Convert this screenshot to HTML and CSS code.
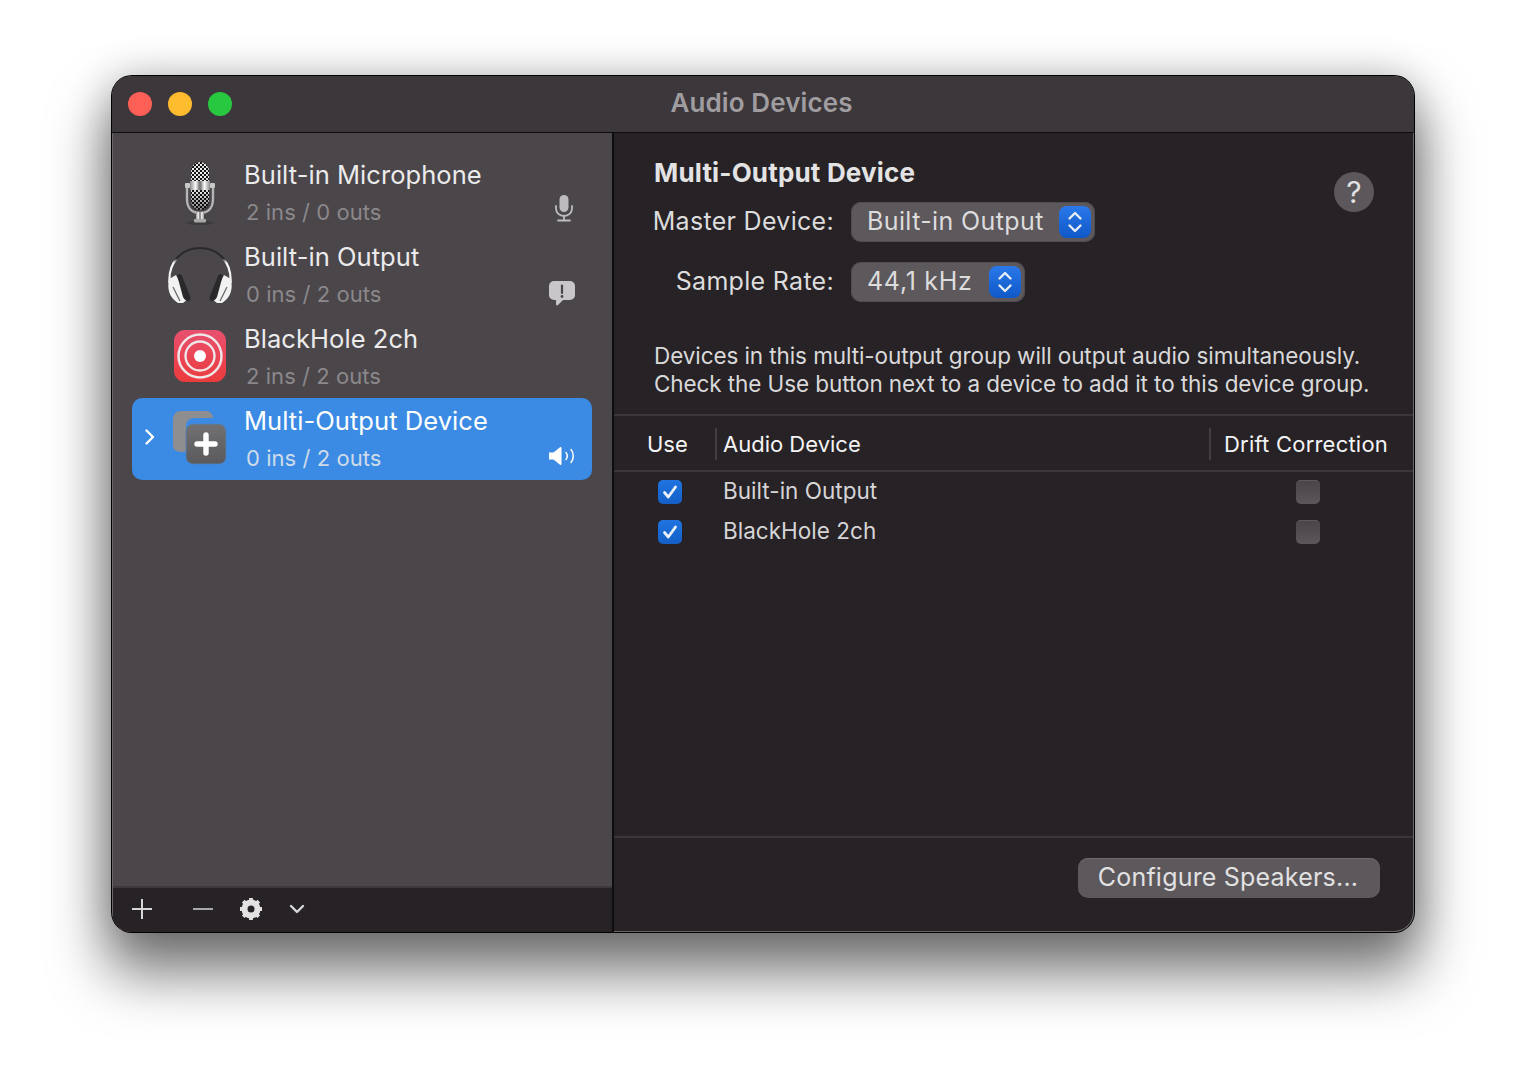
FILE: index.html
```html
<!DOCTYPE html>
<html lang="en">
<head>
<meta charset="utf-8">
<title>Audio Devices</title>
<link rel="stylesheet" href="styles.css">
</head>
<body>
<svg class="defs" width="0" height="0" aria-hidden="true">
  <defs>
    <pattern id="mesh" width="4" height="4" patternUnits="userSpaceOnUse">
      <rect width="4" height="4" fill="#141414"/>
      <rect width="2" height="2" fill="#f2f2f2"/>
      <rect x="2" y="2" width="2" height="2" fill="#d8d8d8"/>
    </pattern>
    <linearGradient id="chrome" x1="0" x2="1" y1="0" y2="0">
      <stop offset="0" stop-color="#8a8a8a"/><stop offset=".28" stop-color="#fafafa"/>
      <stop offset=".5" stop-color="#6c6c6c"/><stop offset=".72" stop-color="#fafafa"/>
      <stop offset="1" stop-color="#8a8a8a"/>
    </linearGradient>
    <linearGradient id="bodyfade" x1="0" x2="0" y1="0" y2="1">
      <stop offset="0" stop-color="#000" stop-opacity="0"/><stop offset="1" stop-color="#000" stop-opacity=".45"/>
    </linearGradient>
    <linearGradient id="bh" x1="0" x2="0" y1="0" y2="1">
      <stop offset="0" stop-color="#e8506f"/><stop offset="1" stop-color="#ec3b3d"/>
    </linearGradient>
    <linearGradient id="tile" x1="0" x2="0" y1="0" y2="1">
      <stop offset="0" stop-color="#717173"/><stop offset="1" stop-color="#5a5a5c"/>
    </linearGradient>
    <linearGradient id="band" x1="0" x2="0" y1="0" y2="1">
      <stop offset="0" stop-color="#2b292b"/><stop offset=".3" stop-color="#2b292b"/><stop offset=".42" stop-color="#f6f6f6"/><stop offset="1" stop-color="#f6f6f6"/>
    </linearGradient>
  </defs>
</svg>
<main class="window">
  <header class="titlebar">
    <div class="lights">
      <span class="light red"></span><span class="light yellow"></span><span class="light green"></span>
    </div>
    <h1 class="title">Audio Devices</h1>
  </header>
  <div class="body">
    <aside class="sidebar">
      <ul class="devices">
        <li class="device">
          <span class="chev"></span>
          <svg class="dicon" width="64" height="66" viewBox="0 0 64 66">
            <ellipse cx="32" cy="63" rx="13" ry="2" fill="#333" opacity=".6"/>
            <path d="M19 28v11c0 9 5 14 13 14s13-5 13-14V28" fill="none" stroke="#b5b5b5" stroke-width="2.400"/>
            <rect x="23" y="2" width="18" height="48" rx="9" fill="url(#mesh)"/>
            <rect x="23" y="30" width="18" height="20" rx="7" fill="url(#bodyfade)"/>
            <rect x="22" y="21" width="20" height="9" fill="url(#chrome)"/>
            <rect x="17" y="23" width="5" height="5" rx="1" fill="#c8c8c8"/>
            <rect x="42" y="23" width="5" height="5" rx="1" fill="#c8c8c8"/>
            <rect x="28" y="52" width="8" height="10" fill="url(#chrome)"/>
            <rect x="26" y="59" width="12" height="3.500" rx="1" fill="#a8a8a8"/>
          </svg>
          <div class="dtext"><div class="dname">Built-in Microphone</div><div class="dsub">2 ins / 0 outs</div></div>
          <svg class="status s-mic" width="20" height="28" viewBox="0 0 20 28">
            <rect x="5.500" y="1" width="9" height="17" rx="4.500" fill="#bdbbbd"/>
            <path d="M2 12v2.500c0 4.500 3.500 7.500 8 7.500s8-3 8-7.500V12" fill="none" stroke="#bdbbbd" stroke-width="1.800" stroke-linecap="round"/>
            <path d="M10 22v4M4 26.500h12" stroke="#bdbbbd" stroke-width="1.800" stroke-linecap="round"/>
          </svg>
        </li>
        <li class="device">
          <span class="chev"></span>
          <svg class="dicon" width="68" height="64" viewBox="0 0 68 64">
            <path d="M3.500 40C2 20 15 5 34 5s32 15 30.500 35" fill="none" stroke="url(#band)" stroke-width="2.200"/>
            <path d="M3 36C1 46 3 54 12 60l5 0 5-4L10 32z" fill="#f2f2f2"/>
            <path d="M65 36c2 10 0 18-9 24l-5 0-5-4 12-24z" fill="#f2f2f2"/>
            <path d="M11 32c2-1 4-1 5 1l8 20c1 3 0 5-2 5s-4-2-5-4z" fill="#2a282a"/>
            <path d="M57 32c-2-1-4-1-5 1l-8 20c-1 3 0 5 2 5s4-2 5-4z" fill="#2a282a"/>
            <path d="M7 44l7 14M61 44l-7 14" stroke="#6a6a6a" stroke-width="1.300"/>
          </svg>
          <div class="dtext"><div class="dname">Built-in Output</div><div class="dsub">0 ins / 2 outs</div></div>
          <svg class="status s-alert" width="28" height="26" viewBox="0 0 28 26">
            <path d="M6 1h16a5 5 0 0 1 5 5v9a5 5 0 0 1-5 5h-7l-5 5c-1 .8-2 .4-2-1v-4H6a5 5 0 0 1-5-5V6a5 5 0 0 1 5-5z" fill="#c8c6c8"/>
            <path d="M14 5.500v7.500" stroke="#4a464a" stroke-width="2.200" stroke-linecap="round"/>
            <circle cx="14" cy="16.500" r="1.400" fill="#4a464a"/>
          </svg>
        </li>
        <li class="device">
          <span class="chev"></span>
          <svg class="dicon di-up" width="52" height="52" viewBox="0 0 52 52">
            <rect width="52" height="52" rx="11" fill="url(#bh)"/>
            <circle cx="26" cy="26" r="21.500" fill="none" stroke="#efe6e8" stroke-width="2.400"/>
            <circle cx="26" cy="26" r="14.500" fill="none" stroke="#efe6e8" stroke-width="2.400"/>
            <circle cx="26" cy="26" r="6" fill="#fff"/>
          </svg>
          <div class="dtext"><div class="dname">BlackHole 2ch</div><div class="dsub">2 ins / 2 outs</div></div>
        </li>
        <li class="device selected">
          <span class="chev"><svg width="12" height="18" viewBox="0 0 12 18"><path d="M2.500 2.500L9 9l-6.500 6.500" fill="none" stroke="#fff" stroke-width="2.400" stroke-linecap="round" stroke-linejoin="round"/></svg></span>
          <svg class="dicon di-up" width="54" height="54" viewBox="0 0 54 54">
            <path d="M9 0h24a7 7 0 0 1 7 7H22c-6 0-9 3-9 9v22c0 3-1 3-4 3-6 0-9-2-9-7V9c0-6 3-9 9-9z" fill="#8e8e90"/>
            <rect x="13" y="13" width="40" height="40" rx="7" fill="url(#tile)" stroke="#4f80b8" stroke-width=".800"/>
            <path d="M33 24v18M24 33h18" stroke="#fff" stroke-width="5.400" stroke-linecap="round"/>
          </svg>
          <div class="dtext"><div class="dname">Multi-Output Device</div><div class="dsub">0 ins / 2 outs</div></div>
          <svg class="status s-vol" width="28" height="20" viewBox="0 0 28 20">
            <path d="M1 6.500h4.500L12 1.200c.8-.6 1.500-.2 1.500.8v16c0 1-.7 1.400-1.500.8l-6.500-5.300H1z" fill="#fff"/>
            <path d="M18 6.500c1.500 2 1.500 5 0 7M23 3.500c3 3.500 3 9.500 0 13" fill="none" stroke="#fff" stroke-width="1.500" stroke-linecap="round"/>
          </svg>
        </li>
      </ul>
      <footer class="toolbar">
        <svg class="tool t-plus" width="22" height="22" viewBox="0 0 22 22"><path d="M11 1v20M1 11h20" stroke="#d6d6d6" stroke-width="2"/></svg>
        <svg class="tool t-minus" width="22" height="4" viewBox="0 0 22 4"><path d="M1 2h20" stroke="#a9a8a9" stroke-width="2"/></svg>
        <svg class="tool t-gear" width="24" height="24" viewBox="0 0 24 24">
          <circle cx="12" cy="12" r="6.500" fill="none" stroke="#e2e2e2" stroke-width="6"/>
          <path d="M12 1v22M1 12h22M4.200 4.200l15.600 15.600M19.800 4.200L4.200 19.800" stroke="#e2e2e2" stroke-width="3.800" stroke-dasharray="4.500 13 4.500"/>
        </svg>
        <svg class="tool t-chev" width="16" height="10" viewBox="0 0 16 10"><path d="M2 2l6 6 6-6" fill="none" stroke="#d8d8d8" stroke-width="2.400" stroke-linecap="round" stroke-linejoin="round"/></svg>
      </footer>
    </aside>
    <section class="detail">
      <div class="top">
        <div class="head">
          <h2 class="dtitle">Multi-Output Device</h2>
          <button class="help">?</button>
        </div>
        <div class="form">
          <label class="flabel">Master Device:</label>
          <div class="popup"><span class="ptext">Built-in Output</span>
            <span class="stepper"><svg width="16" height="26" viewBox="0 0 16 26"><path d="M2.500 9.500L8 4l5.500 5.500M2.500 16.500L8 22l5.500-5.500" fill="none" stroke="#e6eefb" stroke-width="2.400" stroke-linecap="round" stroke-linejoin="round"/></svg></span>
          </div>
          <label class="flabel">Sample Rate:</label>
          <div class="popup pop-rate"><span class="ptext">44,1 kHz</span>
            <span class="stepper"><svg width="16" height="26" viewBox="0 0 16 26"><path d="M2.500 9.500L8 4l5.500 5.500M2.500 16.500L8 22l5.500-5.500" fill="none" stroke="#e6eefb" stroke-width="2.400" stroke-linecap="round" stroke-linejoin="round"/></svg></span>
          </div>
        </div>
        <p class="desc">Devices in this multi-output group will output audio simultaneously.<br>Check the Use button next to a device to add it to this device group.</p>
      </div>
      <div class="table">
        <div class="thead">
          <span class="th th-use">Use</span>
          <span class="th th-name">Audio Device</span>
          <span class="th th-drift">Drift Correction</span>
        </div>
        <div class="trow">
          <span class="check on"><svg width="18" height="18" viewBox="0 0 18 18"><path d="M3.500 9.500l3.800 4.500L14.500 4" fill="none" stroke="#eaf1fb" stroke-width="2.800" stroke-linecap="round" stroke-linejoin="round"/></svg></span>
          <span class="rname">Built-in Output</span>
          <span class="check"></span>
        </div>
        <div class="trow">
          <span class="check on"><svg width="18" height="18" viewBox="0 0 18 18"><path d="M3.500 9.500l3.800 4.500L14.500 4" fill="none" stroke="#eaf1fb" stroke-width="2.800" stroke-linecap="round" stroke-linejoin="round"/></svg></span>
          <span class="rname">BlackHole 2ch</span>
          <span class="check"></span>
        </div>
      </div>
      <div class="bottom">
        <button class="cfg">Configure Speakers...</button>
      </div>
    </section>
  </div>
</main>
</body>
</html>
```

FILE: styles.css
```css
* { box-sizing: border-box; }
html, body { margin: 0; height: 100%; }
body {
  background: #fff;
  padding: 76px 112px 148px;
  font-family: Inter, "Liberation Sans", sans-serif;
  overflow: hidden;
}
.defs { position: absolute; }
.window {
  height: 856px;
  border-radius: 20px;
  background: #262226;
  display: flex;
  flex-direction: column;
  overflow: hidden;
  box-shadow: 0 0 0 1px #000, inset 0 0 0 1px #6a6769, 0 36px 56px 6px rgba(0,0,0,.52), 0 0 40px rgba(0,0,0,.22);
}
.titlebar {
  height: 57px;
  flex: none;
  background: #3c373b;
  border-bottom: 1px solid #0e0c0e;
  display: flex;
  align-items: center;
  position: relative;
  padding-left: 16px;
}
.lights { display: flex; gap: 16px; }
.light { width: 24px; height: 24px; border-radius: 50%; }
.red { background: #fe5f57; }
.yellow { background: #febc2e; }
.green { background: #28c840; }
.title {
  position: absolute;
  left: 0; right: 3px; top: 12px;
  margin: 0;
  text-align: center;
  font-size: 26px;
  line-height: 30px;
  font-weight: 600;
  letter-spacing: .1px;
  color: #a09da0;
}
.body { flex: 1; display: flex; min-height: 0; }
.sidebar {
  width: 501px;
  flex: none;
  background: #4a464a;
  border-right: 2px solid #0f0d0f;
  margin-left: 1px;
  display: flex;
  flex-direction: column;
}
.devices {
  list-style: none;
  margin: 0;
  padding: 19px 20px 0 19px;
  flex: 1;
}
.device {
  height: 82px;
  display: flex;
  align-items: center;
  position: relative;
  border-radius: 10px;
  padding-left: 6px;
}
.selected { background: #3b8be5; }
.chev { width: 24px; flex: none; display: flex; justify-content: center; margin-top: -4px; }
.dicon { position: absolute; left: 68px; top: 50%; transform: translate(-50%, -50%); }
.di-up { margin-top: -1px; }
.dtext { margin-left: 82px; position: relative; top: -1px; }
.dname {
  font-size: 25.500px;
  line-height: 30px;
  letter-spacing: .06px;
  color: #ecebec;
  white-space: nowrap;
}
.dsub {
  margin: 9px 0 0 2px;
  font-size: 22px;
  line-height: 26px;
  letter-spacing: .05px;
  color: #8b888b;
  white-space: nowrap;
}
.selected .dname { color: #fff; }
.selected .dsub { color: #cfdbe9; }
.status { position: absolute; }
.s-mic { right: 18px; top: 42px; }
.s-alert { right: 16px; top: 46px; }
.s-vol { right: 16px; top: 48px; }
.toolbar {
  height: 46px;
  flex: none;
  background: #262226;
  border-top: 2px solid #3c383c;
  padding-bottom: 3px;
  position: relative;
  display: flex;
  align-items: center;
}
.tool { flex: none; }
.t-plus { margin-left: 18px; }
.t-minus { margin-left: 39px; }
.t-gear { margin-left: 25px; }
.t-chev { margin-left: 26px; }
.detail { flex: 1; display: flex; flex-direction: column; min-width: 0; margin-right: 1px; }
.top { padding: 24px 39px 0 40px; height: 283px; border-bottom: 2px solid #3a363a; }
.head { display: flex; justify-content: space-between; align-items: flex-start; height: 36px; }
.dtitle {
  margin: 0;
  font-size: 26px;
  line-height: 32px;
  font-weight: 700;
  letter-spacing: .18px;
  color: #e4e3e4;
}
.help {
  width: 40px; height: 40px;
  margin-top: 15px;
  border: 0;
  border-radius: 50%;
  background: #5b575b;
  color: #e2e1e2;
  font: 400 30px/40px Inter, sans-serif;
  padding: 0;
}
.form {
  display: grid;
  grid-template-columns: 180px auto;
  justify-content: start;
  justify-items: start;
  column-gap: 17px;
  row-gap: 20px;
  margin-top: 9px;
  align-items: center;
}
.flabel {
  justify-self: end;
  font-size: 25px;
  line-height: 30px;
  padding-bottom: 2px;
  letter-spacing: .3px;
  color: #dddcdd;
  white-space: nowrap;
}
.popup {
  height: 40px;
  display: flex;
  align-items: center;
  padding-left: 16px;
  padding-right: 4px;
  border-radius: 10px;
  background: #5c585c;
  box-shadow: inset 0 0 0 1px #4f4b4f;
  font-size: 25px;
  color: #dddcdd;
  white-space: nowrap;
}
.ptext { line-height: 30px; padding-bottom: 2px; letter-spacing: .38px; }
.pop-rate .ptext { letter-spacing: .72px; }
.stepper {
  width: 32px; height: 32px;
  margin-left: 15px;
  border-radius: 8px;
  background: linear-gradient(#2a78ea, #0f58c8);
  display: flex;
  align-items: center;
  justify-content: center;
}
.pop-rate .stepper { margin-left: 16px; }
.desc {
  margin: 40px 0 0 0;
  font-size: 22.500px;
  line-height: 28px;
  letter-spacing: -.09px;
  color: #dad9da;
  white-space: nowrap;
}
.table { flex: 1; display: flex; flex-direction: column; border-bottom: 2px solid #3a363a; }
.thead {
  height: 56px;
  border-bottom: 2px solid #3a363a;
  display: flex;
  align-items: center;
  flex: none;
  padding-top: 1px;
}
.th {
  font-size: 22px;
  color: #f5f4f5;
  line-height: 32px;
  white-space: nowrap;
}
.th-use { width: 101px; padding-left: 33px; }
.th-name {
  width: 494px;
  padding-left: 6px;
  border-left: 2px solid #423e42;
}
.th-drift { padding-left: 13px; border-left: 2px solid #423e42; letter-spacing: .22px; }
.trow { height: 40px; display: flex; align-items: center; flex: none; }
.rname {
  width: 573px;
  font-size: 22.500px;
  letter-spacing: .02px;
  color: #d6d5d6;
  margin-top: -4px;
}
.check {
  width: 24px; height: 24px;
  flex: none;
  border-radius: 5px;
  background: linear-gradient(#484448, #5a565a);
  box-shadow: inset 0 1px 0 #5e5a5e;
  display: flex;
  align-items: center;
  justify-content: center;
}
.check.on {
  margin-left: 44px;
  margin-right: 41px;
  background: linear-gradient(#1f74e0, #145fc6);
  box-shadow: none;
}
.bottom {
  height: 94px;
  flex: none;
  display: flex;
  justify-content: flex-end;
  padding: 20px 33px 0 0;
}
.cfg {
  width: 302px;
  height: 40px;
  border: 0;
  border-radius: 10px;
  background: #5c585c;
  box-shadow: inset 0 1px 0 #6c686c;
  font: 400 25px/38px Inter, sans-serif;
  letter-spacing: .2px;
  color: #e2e1e2;
  padding: 0 2px 2px 0;
}
```
